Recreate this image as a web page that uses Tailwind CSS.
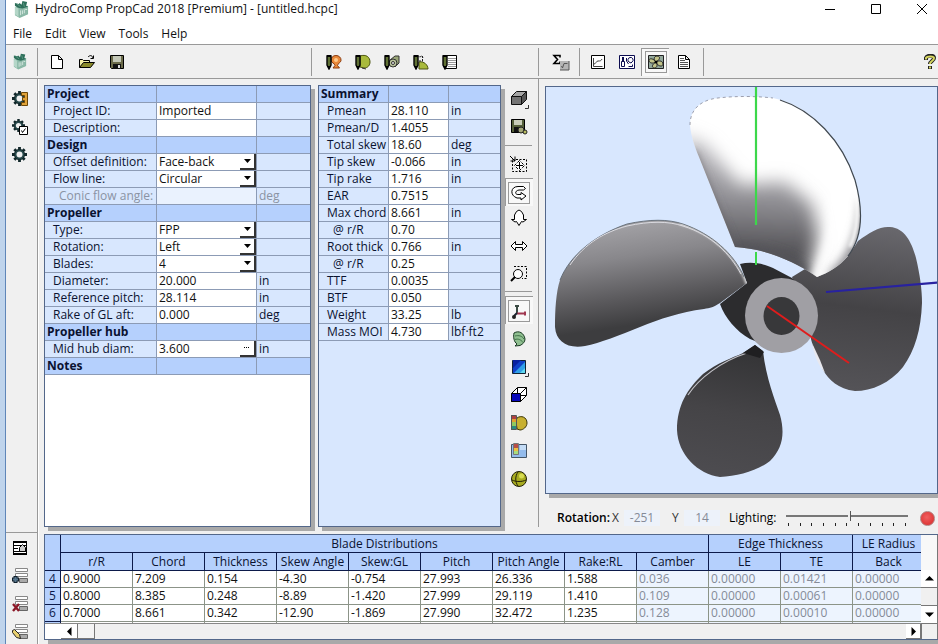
<!DOCTYPE html>
<html lang="en">
<head>
<meta charset="utf-8">
<title>HydroComp PropCad 2018</title>
<script src="https://cdn.jsdelivr.net/npm/@tailwindcss/browser@4"></script>
</head>
<body class="flex h-screen overflow-hidden bg-white text-[12px] leading-[16px] text-[#111] font-['Open_Sans','Noto_Sans',sans-serif]">

<svg class="hidden" aria-hidden="true">
  <defs>
    <symbol id="logo" viewBox="0 0 16 18">
      <path d="M1 6l4 1 10-2v9l-9 4-5-3z" fill="#86b8a4"/><path d="M1 6l4 2v9l-4-3z" fill="#b4d6c8"/><path d="M5 8l9-2v8l-9 3z" fill="#8cb8a8"/>
      <path d="M1 2l4 1 1-1 2 2 1-4 5 1-1 4 2 1-6 2-5-1-3-2z" fill="#2d6f5a"/><path d="M3 3l4 3M10 2l1 4" stroke="#5d9a85"/><path d="M7 10v5M9 10v4M11 9v4M12 9h2" stroke="#d5e8df"/>
    </symbol>
    <symbol id="gear" viewBox="0 0 16 16">
      <path d="M8 0v16M0 8h16M2.500 2.500l11 11M13.500 2.500l-11 11" stroke="#12272a" stroke-width="3"/><circle cx="8" cy="8" r="5.500" fill="#26484a" stroke="#12272a"/><circle cx="8" cy="8" r="3.200" fill="#f0f0f0"/>
    </symbol>
    <symbol id="pen" viewBox="0 0 6 16">
      <path d="M1 2h4v9l-2 4-2-4z" fill="#5f7034" stroke="#000" stroke-width="1.400"/><path d="M1 1h4v2H1zM1 12h4l-2 3z" fill="#000"/>
    </symbol>
    <symbol id="rows" viewBox="0 0 16 16">
      <path d="M3.500.500h12v3h-12zM3.500 5.500h12v3h-12z" fill="#fff" stroke="#888"/><path d="M7.500 10.500h8v4h-8z" fill="#aaa" stroke="#666"/>
    </symbol>
  </defs>
</svg>

<div class="w-[6px] shrink-0 border-r border-[#5f86b8] bg-[#bfd4ec]"></div>

<div class="flex min-w-0 flex-1 flex-col bg-[#f0f0f0]">
  <header class="flex h-[18px] shrink-0 items-center bg-white pl-2">
    <svg class="h-[17px] w-[15px]"><use href="#logo"/></svg>
    <h1 class="ml-[6px] flex-1 whitespace-nowrap">HydroComp PropCad 2018 [Premium] - [untitled.hcpc]</h1>
    <div class="flex gap-[30px] pr-[8px]">
      <button aria-label="Minimize"><svg class="size-4" viewBox="0 0 16 16" stroke="#000"><path d="M3 8.500h10"/></svg></button>
      <button aria-label="Maximize"><svg class="size-4" viewBox="0 0 16 16" stroke="#000" fill="none"><path d="M3.500 3.500h9v9h-9z"/></svg></button>
      <button aria-label="Close"><svg class="size-4" viewBox="0 0 16 16" stroke="#000"><path d="M3 3l10 10M13 3L3 13"/></svg></button>
    </div>
  </header>
  <nav class="flex h-[26px] shrink-0 items-center gap-[13px] bg-white pl-[7px] pt-[6px]">
    <button>File</button><button>Edit</button><button>View</button><button>Tools</button><button>Help</button>
  </nav>

  <div class="flex h-[35px] shrink-0 items-center border-y border-[#999]">
    <div class="flex h-[28px] w-[32px] items-center justify-center border-r border-[#999] pr-1"><svg class="h-[17px] w-[14px]"><use href="#logo"/></svg></div>
    <div class="flex h-[28px] w-[274px] items-center gap-[14px] border-r border-[#999] pl-[11px]">
      <button aria-label="New"><svg class="size-4" viewBox="0 0 16 16" fill="#fff" stroke="#000"><path d="M2.500 1.500h7l4 4v9h-11zM9.500 1.500v4h4"/></svg></button>
      <button aria-label="Open"><svg class="size-4" viewBox="0 0 16 16" stroke="#000"><path d="M.500 13.500v-8h3l1 1h6v3" fill="#f3eea5"/><path d="M.500 13.500l4-5h11l-4 5z" fill="#8a8a2a"/><path d="M9 3c2-2 4-2 5 1M14.500 1.500v3h-3" fill="none"/></svg></button>
      <button aria-label="Save"><svg class="size-4" viewBox="0 0 16 16"><path d="M1.500 1.500h13v13h-12l-1-1z" fill="#6b6b4a" stroke="#000"/><path d="M4 2h8v6H4z" fill="#c4c8b8"/><path d="M4 10h8v5H4z" fill="#111"/><path d="M9 11h2v3H9z" fill="#ddd"/></svg></button>
    </div>
    <div class="flex h-[28px] w-[227px] items-center gap-[13px] border-r border-[#999] pl-[14px]">
      <button aria-label="Edit point"><svg class="size-4" viewBox="0 0 16 16"><path d="M10 1.500a5 4.500 0 0 1 5 5c0 2-3.500 3-3.500 5l2 2.500H7l2-2.500c0-2-4-3-4-5a5 4.500 0 0 1 5-5z" fill="#e9893a" stroke="#8c3c10"/><circle cx="10" cy="6" r="2" fill="#ffc98a"/><use href="#pen" width="6" height="16"/></svg></button>
      <button aria-label="Edit blade"><svg class="size-4" viewBox="0 0 16 16"><path d="M5 13V2c6-2 10 1 10 6 0 3-2 6-6 6z" fill="#a9ba3c" stroke="#4c5510"/><path d="M7 14l4 1" stroke="#333"/><use href="#pen" width="6" height="16"/></svg></button>
      <button aria-label="Edit hub"><svg class="size-4" viewBox="0 0 16 16"><path d="M6 6l5-4h4v7l-4 4z" fill="#9aa678" stroke="#333"/><circle cx="9" cy="9" r="4" fill="#b8c29a" stroke="#333"/><circle cx="9" cy="9" r="1.500" fill="#eee" stroke="#333"/><use href="#pen" width="6" height="16"/></svg></button>
      <button aria-label="Edit root"><svg class="size-4" viewBox="0 0 16 16"><path d="M6 15V8c5-1 9 3 9 7z" fill="#a9ba3c" stroke="#4c5510"/><path d="M5 1.500l2 2 1.500-2L10 3.500M9.500 2v5M6 7h4" stroke="#222" fill="none" stroke-dasharray="2 1"/><use href="#pen" width="6" height="16"/></svg></button>
      <button aria-label="Edit table"><svg class="size-4" viewBox="0 0 16 16"><path d="M3.500 1.500h11v13h-11z" fill="#fff" stroke="#000"/><path d="M6 4.500h8M6 6.500h8M6 8.500h8M6 10.500h8M6 12.500h8" stroke="#999"/><use href="#pen" width="6" height="16"/></svg></button>
    </div>
    <div class="flex h-[28px] w-[41px] items-center justify-center border-r border-[#999] pl-1">
      <button aria-label="Calculate"><svg class="size-[18px]" viewBox="0 0 18 18"><path d="M8 4.500V2.500H2L5.500 6.500 2 10.500h6V8.500" fill="none" stroke="#000" stroke-width="1.600"/><path d="M8 8h9v9H8z" fill="#b5b5b5"/><path d="M9.500 13l1 2 1.500-4.500h3.500M17 8v9H8" fill="none" stroke="#555"/></svg></button>
    </div>
    <div class="flex h-[28px] w-[124px] items-center border-r border-[#999] pl-[10px]">
      <button aria-label="Graph" class="mr-[13px]"><svg class="size-4" viewBox="0 0 16 16" fill="none" stroke="#000"><path d="M1.500 1.500h13v13h-13z" fill="#fff"/><path d="M3.500 4v8.500h9M4 10c2 0 2-3 4-3s3 0 4-2" stroke="#444"/></svg></button>
      <button aria-label="Drawing" class="mr-[6px]"><svg class="size-4" viewBox="0 0 16 16" fill="none" stroke="#0c0c50"><path d="M.500 1.500h15v13H.500z" fill="#fff"/><path d="M4.500 3v4M3.500 3v4M2.500 7.500h3v5h-3zM7.500 4v3l2 3M11 3.500a2.500 2.500 0 0 1 2 4.500l-1 1-2-1a2.500 2.500 0 0 1 1-4.500zM9.500 12.500h4v-2"/></svg></button>
      <button aria-label="3D view" aria-pressed="true" class="mr-[7px] flex size-[28px] items-center justify-center border-l border-t border-[#999] bg-[#f8f8f8]"><span class="flex size-[22px] items-center justify-center border border-[#999]"><svg class="size-4" viewBox="0 0 16 16"><path d="M.500 1.500h15v13H.500z" fill="#93a89c" stroke="#222"/><g fill="#c2c48a" stroke="#222"><path d="M8 8C5 6 6 2 9 2s4 3-1 6z"/><path d="M8 8C5 10 1 9 1 6.500S5 4 8 8z"/><path d="M8 8c3-2 7-1 7 2s-5 3-7-2z"/><path d="M8 8c2 3 1 6-1.500 6S3 11 8 8z"/></g><circle cx="8" cy="8" r="1.500"/></svg></span></button>
      <button aria-label="Report"><svg class="size-4" viewBox="0 0 16 16" fill="#fff" stroke="#000"><path d="M2.500 1.500h7l4 4v9h-11zM9.500 1.500v4h4"/><path d="M4 4.500h4M4 6.500h5M4 8.500h8M4 10.500h8M4 12.500h8" stroke="#555"/></svg></button>
    </div>
    <button aria-label="Help" class="ml-auto"><svg class="size-4" viewBox="0 0 16 16" fill="none"><path d="M4 6V4c1-3 8-3 8 0 0 3-4 3-4 6M8 12v3" stroke="#222" stroke-width="4"/><path d="M4 5.500V4c1-2 8-2 8 0 0 3-4 3-4 6M8 12.500v2" stroke="#d6d660" stroke-width="2"/></svg></button>
  </div>

  <div class="flex min-h-0 flex-1">
    <aside class="flex w-[32px] shrink-0 flex-col border-r border-[#999]">
      <div class="flex flex-1 flex-col items-start gap-[12px] pl-[6px] pt-[12px]">
        <button aria-label="Units"><svg class="size-4" viewBox="0 0 16 16"><use href="#gear" width="15" height="15"/><path d="M9.500 1.500h6v13h-6v-3h3v-2h-2v-3h2v-2h-3z" fill="#e0a33a" stroke="#6b4708"/></svg></button>
        <button aria-label="Preferences"><svg class="size-4" viewBox="0 0 16 16"><use href="#gear" width="13" height="13"/><path d="M7.500 7.500h8v8h-8z" fill="#fff" stroke="#000"/><path d="M9.500 11.500l1 2 3-4" fill="none" stroke="#000"/></svg></button>
        <button aria-label="Settings"><svg class="size-[15px]"><use href="#gear"/></svg></button>
      </div>
      <div class="flex flex-col items-start gap-[12px] border-t border-[#999] pb-[4px] pl-[6px] pt-[7px]">
        <button aria-label="Row options"><svg class="size-4" viewBox="0 0 16 16"><path d="M1 1h14v14H1z" fill="#fff"/><path d="M1 2h14M1 14h14" stroke="#000" stroke-width="2"/><path d="M1 5.500h14M1 8.500h5M1 11.500h14M1.500 1v14M14.500 1v14" stroke="#000"/><path d="M7.500 11.500v-4l3-3 3 3v4z" fill="#ccc" stroke="#000"/></svg></button>
        <button aria-label="Add row"><svg class="size-4" viewBox="0 0 16 16"><use href="#rows" width="16" height="16"/><path d="M3.500 8v7M0 11.500h7" stroke="#10202c" stroke-width="4"/><path d="M3.500 9v5M1 11.500h5" stroke="#587890" stroke-width="2"/></svg></button>
        <button aria-label="Delete row"><svg class="size-4" viewBox="0 0 16 16"><use href="#rows" width="16" height="16"/><path d="M1 8l6 7M7 8l-6 7" stroke="#8c1828" stroke-width="2.400"/></svg></button>
        <button aria-label="Edit row"><svg class="size-4" viewBox="0 0 16 16"><use href="#rows" width="16" height="16"/><path d="M.500 6.500l2-1 5 5 1 4-4-1-4-5z" fill="#e8d070" stroke="#222"/></svg></button>
      </div>
    </aside>

    <main class="flex min-w-0 flex-1 flex-col border-l border-white pl-[5px]">
      <div class="flex min-h-0 flex-1">
        <section class="mb-[7px] mr-[7px] mt-[6px] flex w-[267px] shrink-0 flex-col border border-[#53678a] bg-white shadow-[4px_4px_0_#a9a9a9]">
          <table class="w-full table-fixed border-separate border-spacing-0 text-[#0a1230]">
            <colgroup><col class="w-[112px]"><col class="w-[100px]"><col></colgroup>
            <tbody id="project"></tbody>
          </table>
          <textarea aria-label="Notes" class="w-full flex-1 resize-none p-1 outline-none"></textarea>
        </section>

        <section class="mb-[7px] mt-[6px] w-[183px] shrink-0 border border-[#53678a] bg-[#d8e7fe] shadow-[4px_4px_0_#a9a9a9]">
          <table class="w-full table-fixed border-separate border-spacing-0 text-[#0a1230]">
            <colgroup><col class="w-[70px]"><col class="w-[60px]"><col></colgroup>
            <tbody id="summary"></tbody>
          </table>
        </section>

        <div class="mb-[7px] flex w-[38px] shrink-0 flex-col items-center border-r border-[#999] pr-[2px] pt-[10px]">
          <button aria-label="Projection" class="mb-[8px]"><svg class="size-5" viewBox="0 0 20 20"><path d="M2.500 7.500h10v8h-10z" fill="#747474" stroke="#111"/><path d="M2.500 7.500l5-5h10l-5 5z" fill="#a5a5a5" stroke="#111"/><path d="M12.500 7.500l5-5v8l-5 5z" fill="#555" stroke="#111"/><path d="M19.500 16v3.500H16" fill="none" stroke="#333"/></svg></button>
          <button aria-label="Save image" class="mb-[8px]"><svg class="size-5" viewBox="0 0 20 20"><path d="M2.500 2.500h13v13h-13z" fill="#55603a" stroke="#000"/><path d="M5 3h8v5H5z" fill="#c8ccb8"/><path d="M5 10h7v5H5z" fill="#111"/><circle cx="12" cy="13" r="3" fill="#a5a878" stroke="#222"/><circle cx="16" cy="15" r="2" fill="#b8bc60" stroke="#222"/></svg></button>
          <div class="mb-[8px] h-px w-[27px] bg-[#999]"></div>
          <button aria-label="Fit view" class="mb-[4px]"><svg class="size-5" viewBox="0 0 20 20" fill="none" stroke="#000"><path d="M3.500 5.500h14v12h-14z" stroke-dasharray="2 1.500"/><path d="M10.500 6.500l-5 5 5 5 5-5z" fill="#fff" stroke-dasharray="3 1.500"/><path d="M10.500 8v7M7 11.500h7M1 2l5 5M6 2.500v4.500H1.500"/></svg></button>
          <button aria-label="Rotate" aria-pressed="true" class="mb-[2px] flex size-[28px] items-center justify-center border-l border-t border-[#999] bg-[#f8f8f8]"><span class="flex size-[22px] items-center justify-center border border-[#999]"><svg class="size-5" viewBox="0 0 20 20" fill="#fff" stroke="#000"><path d="M16.500 5.500l-2-2H9c-7.500 0-8.500 9-1 11.500h4v2l5-4-5-3.500v2H9c-3.500 0-3-4 1-4.500h4.500z"/></svg></span></button>
          <button aria-label="Tilt" class="mb-[8px]"><svg class="size-5" viewBox="0 0 20 20" fill="#fff" stroke="#000"><path d="M7.500 3.500l2.500-1.500 2.500 1.500L14.500 7v4.500h3L14 14l-1.500-.5L10 17.500 7.500 13.500 6 14l-3.500-2.500h3V7z"/></svg></button>
          <button aria-label="Pan" class="mb-[8px]"><svg class="size-5" viewBox="0 0 20 20" fill="#fff" stroke="#000"><path d="M2 10l4.500-4.500v3h7v-3L18 10l-4.500 4.500v-3h-7v3z"/></svg></button>
          <button aria-label="Zoom" class="mb-[7px]"><svg class="size-5" viewBox="0 0 20 20" fill="none" stroke="#000"><path d="M5 2.500h12.500v12H13" stroke-dasharray="2 1.500"/><circle cx="9" cy="10" r="4.500" fill="#fff"/><path d="M6 13l-4 4" stroke-width="2"/></svg></button>
          <div class="mb-[4px] h-px w-[27px] bg-[#999]"></div>
          <button aria-label="Axes" aria-pressed="true" class="mb-[5px] flex size-[28px] items-center justify-center border-l border-t border-[#999] bg-[#f8f8f8]"><span class="flex size-[22px] items-center justify-center border border-[#999]"><svg class="size-5" viewBox="0 0 20 20" fill="none"><path d="M8 12V4M6 5h4" stroke="#3a4a44" stroke-width="2"/><path d="M8 12.500h9M16 10.500v4" stroke="#a03850" stroke-width="2"/><path d="M8 12l-3 3" stroke="#1c2430" stroke-width="2"/><circle cx="5" cy="16" r="2" fill="#222"/></svg></span></button>
          <button aria-label="Blade" class="mb-[8px]"><svg class="size-5" viewBox="0 0 20 20"><path d="M5 4c5-3 10 0 11 6 0 3-2 5-5 6.500L6 17l2-2c-3-2-4-7-3-11z" fill="#8fbf90" stroke="#1b3a24"/><path d="M6 7c4-1 7 0 9 3M6 10.500c3-1 6 0 8 3" fill="none" stroke="#3f7046"/></svg></button>
          <button aria-label="Background" class="mb-[8px]"><svg class="size-5" viewBox="0 0 20 20"><path d="M3.500 3.500h13v13h-13z" fill="#1040c8" stroke="#123"/><path d="M3 12L12 3H4v9z" fill="#0820a0"/><path d="M5 16L16 5v11z" fill="#30a0e8"/><path d="M11 16l5-5v5z" fill="#60d8f0"/><path d="M19.500 16v3.500H16" fill="none" stroke="#333"/></svg></button>
          <button aria-label="Wireframe" class="mb-[8px]"><svg class="size-5" viewBox="0 0 20 20" fill="#fff" stroke="#000"><path d="M2.500 8.500l6-6h9v8l-6 6h-9z"/><path d="M17.500 2.500l-6 6M8.500 2.500v8h9" fill="none"/><path d="M2.500 8.500h9v8h-9z" fill="#0808b8"/></svg></button>
          <button aria-label="Contours" class="mb-[8px]"><svg class="size-5" viewBox="0 0 20 20"><path d="M8 16c0-3-2-8 0-11 4-3 10-1 10 5 0 4-4 7-7 7z" fill="#c8b030" stroke="#3a3508"/><path d="M2 2h5v4H2z" fill="#b04040"/><path d="M2 6h5v3H2z" fill="#e0a030"/><path d="M2 9h5v4H2z" fill="#90c860"/><path d="M2 13h5v4H2z" fill="#2a8a80"/><path d="M2.500 2.500h5v14h-5z" fill="none" stroke="#555"/></svg></button>
          <button aria-label="Legend" class="mb-[8px]"><svg class="size-5" viewBox="0 0 20 20"><path d="M2.500 3.500h15v13h-15z" fill="#94bcec" stroke="#456"/><path d="M11 4h6v5h-6z" fill="#c4dcf6"/><path d="M5 3h4v4H5z" fill="#b85048"/><path d="M5 7h4v3H5z" fill="#f0c040"/><path d="M5 10h4v3H5z" fill="#a8dc80"/><path d="M4.500 2.500h5v11h-5z" fill="none" stroke="#777"/></svg></button>
          <button aria-label="Sphere"><svg class="size-5" viewBox="0 0 20 20"><circle cx="10" cy="10" r="7.500" fill="#a8ac20" stroke="#222008"/><path d="M3 11c4 2 10 2 14 0M9 3c-3 4-3 10 0 14" fill="none" stroke="#222008"/><circle cx="12.500" cy="7" r="2.500" fill="#d8dc50"/></svg></button>
        </div>

        <div class="flex min-w-0 flex-1 flex-col pl-[6px] pt-[7px]">
          <div class="min-h-0 flex-1 border border-[#53678a] bg-[#d8e7fe] shadow-[4px_4px_0_#a9a9a9]">
            <svg class="size-full" viewBox="546 87 391 406" role="img" aria-label="Propeller">
              <defs>
                <linearGradient id="shade" gradientUnits="userSpaceOnUse" x1="760" y1="160" x2="755" y2="255"><stop offset="0" stop-color="#b4b3b8"/><stop offset=".45" stop-color="#8e8d92"/><stop offset="1" stop-color="#4e4d51"/></linearGradient>
                <linearGradient id="left" gradientUnits="userSpaceOnUse" x1="640" y1="218" x2="655" y2="322"><stop offset="0" stop-color="#a5a4a8"/><stop offset=".35" stop-color="#88878b"/><stop offset=".75" stop-color="#59585b"/><stop offset="1" stop-color="#3d3d3f"/></linearGradient>
                <linearGradient id="right" gradientUnits="userSpaceOnUse" x1="880" y1="228" x2="860" y2="390"><stop offset="0" stop-color="#68676c"/><stop offset=".5" stop-color="#444346"/><stop offset="1" stop-color="#545357"/></linearGradient>
                <linearGradient id="bot" gradientUnits="userSpaceOnUse" x1="745" y1="350" x2="720" y2="477"><stop offset="0" stop-color="#343436"/><stop offset=".5" stop-color="#454447"/><stop offset="1" stop-color="#4d4c50"/></linearGradient>
                <filter id="b3" x="-50%" y="-50%" width="200%" height="200%"><feGaussianBlur stdDeviation="9"/></filter>
                <filter id="b2" x="-50%" y="-50%" width="200%" height="200%"><feGaussianBlur stdDeviation="5"/></filter>
                <filter id="b1" x="-50%" y="-50%" width="200%" height="200%"><feGaussianBlur stdDeviation="1.500"/></filter>
                <path id="topShape" d="M735 247L699 157C694 145 691 136 690 125C690 110 700 100 718 98C735 96 755 96 773 98C810 105 842 140 855 180C864 212 862 238 848 256C840 266 828 273 817 277C800 265 770 249 735 247Z"/>
                <path id="leftShape" d="M555 327C555 310 556 292 560 280C570 255 595 235 627 224C650 219 668 219 683 224C715 234 738 258 747 283L720 303C714 307 710 308 704 309C680 312 660 319 640 327C620 335 600 343 585 346C568 349 556 342 555 327Z"/>
                <clipPath id="tc"><use href="#topShape"/></clipPath><clipPath id="lc"><use href="#leftShape"/></clipPath>
              </defs>
              <path d="M792 277L805 269L825 273C840 266 850 255 858 241C870 232 880 226 890 227C905 228 912 243 916 258C920 275 922 290 922 303C921 330 915 350 903 367C890 383 872 391 855 391C838 389 829 380 823 370C817 358 813 348 810 335Z" fill="url(#right)"/>
              <path d="M812 343C814 356 819 366 825 373L820 360Z" fill="#e8e8ee"/>
              <path d="M740 264C752 261 765 264 773 268L792 278L812 300L765 345L750 339C736 331 725 318 720 304L747 283Z" fill="#2c2c2e"/>
              <path d="M755 345L763 351C766 378 775 400 780 415C785 433 783 448 770 461C757 471 738 476 720 477C698 474 678 455 677 430C677 405 688 388 703 374C717 363 732 358 743 353Z" fill="url(#bot)"/>
              <path d="M747 353C722 361 699 378 688 395" fill="none" stroke="#c4c4ca" stroke-width="1.200"/>
              <path d="M755 345L764 352L760 358L743 353Z" fill="#1f1f21"/>
              <use href="#leftShape" fill="url(#left)"/>
              <g clip-path="url(#lc)"><path d="M680 222C712 230 740 256 749 286" fill="none" stroke="#fff" stroke-width="4" filter="url(#b1)"/></g>
              <path d="M560 280C570 255 595 235 627 224C650 219 668 219 683 224C712 234 734 254 744 277" fill="none" stroke="#55606a" stroke-width=".8"/>
              <path d="M570 265C585 243 605 232 627 226C650 221 668 221 683 226C712 235 730 254 741 274" fill="none" stroke="#dcdce2" stroke-width="1"/>
              <path d="M756 252V265" stroke="#3cd84a" stroke-width="2"/>
              <use href="#topShape" fill="#fff"/>
              <g clip-path="url(#tc)">
                <path d="M680 135L705 145L740 185L785 182L812 204L818 235L806 290L725 275Z" fill="url(#shade)" filter="url(#b3)"/>
                <path d="M690 152L732 254" fill="none" stroke="#5a595e" stroke-width="9" filter="url(#b2)"/>
                <path d="M737 251C765 252 790 262 806 275" fill="none" stroke="#55545a" stroke-width="14" filter="url(#b2)"/>
                <path d="M836 185C838 220 830 250 815 282" fill="none" stroke="#fff" stroke-width="10" filter="url(#b2)"/>
                <path d="M866 200C864 240 850 262 832 278" fill="none" stroke="#8a898e" stroke-width="12" filter="url(#b2)"/>
                <path d="M843 152C859 185 862 222 850 247" fill="none" stroke="#fff" stroke-width="3" filter="url(#b1)"/>
              </g>
              <path d="M780 100C812 110 842 140 855 180C864 212 862 238 848 256" fill="none" stroke="#404850" stroke-width="1.200"/>
              <path d="M690 125C690 110 700 100 718 98C735 96 755 96 773 98" fill="none" stroke="#667" stroke-width=".6" stroke-dasharray="3 3"/>
              <ellipse cx="781.500" cy="315.500" rx="36.500" ry="37.500" fill="#a09fa4"/>
              <ellipse cx="781.500" cy="316" rx="18" ry="19" fill="#38383a"/>
              <path d="M756 87V225" stroke="#3cd84a" stroke-width="2.200"/>
              <path d="M826 292L938 282.500" stroke="#2822a0" stroke-width="2.200"/>
              <path d="M767 306L849 363" stroke="#e01c1c" stroke-width="2"/>
            </svg>
          </div>
          <div class="flex h-[40px] shrink-0 items-center whitespace-nowrap pl-[12px] pr-[3px] pt-[8px]">
            <span class="w-[55px] font-semibold text-black">Rotation:</span>
            <label for="rx" class="w-[12px] text-[#333]">X</label>
            <input id="rx" value="-251" readonly class="mr-[12px] w-[36px] bg-[#edf2fa] text-center text-[#858b98] outline-none">
            <label for="ry" class="w-[12px] text-[#333]">Y</label>
            <input id="ry" value="14" readonly class="mr-[9px] w-[36px] bg-[#edf2fa] text-center text-[#858b98] outline-none">
            <label for="light" class="w-[55px] text-black">Lighting:</label>
            <div class="min-w-0 flex-1 pl-[2px] pr-[12px]">
              <input id="light" type="range" min="0" max="100" value="52" class="block h-[10px] w-full appearance-none bg-transparent [&::-webkit-slider-runnable-track]:h-[2px] [&::-webkit-slider-runnable-track]:bg-[#777] [&::-webkit-slider-thumb]:mt-[-4px] [&::-webkit-slider-thumb]:h-[10px] [&::-webkit-slider-thumb]:w-[3px] [&::-webkit-slider-thumb]:appearance-none [&::-webkit-slider-thumb]:border-r [&::-webkit-slider-thumb]:border-[#555] [&::-webkit-slider-thumb]:bg-[#f0f0f0]">
              <div class="flex justify-between px-[2px] pt-[2px]" id="ticks"></div>
            </div>
            <button aria-label="Record" class="size-[15px] rounded-full border border-[#b08080] bg-[radial-gradient(circle_at_45%_40%,#f06060,#d82828)]"></button>
          </div>
        </div>
      </div>

      <section class="mb-[4px] flex shrink-0 border border-r-0 border-[#53678a] bg-[#f0f0f0] shadow-[4px_4px_0_#a9a9a9]">
        <div class="min-w-0 flex-1">
          <div class="h-[89px] overflow-hidden border-b border-[#888]">
            <table class="w-[880px] table-fixed border-separate border-spacing-0 bg-white">
              <thead id="bhead" class="text-[#0a1230]"></thead>
              <tbody id="blades"></tbody>
            </table>
          </div>
          <div class="flex h-[15px]">
            <div class="w-[16px] bg-white"></div>
            <button aria-label="Scroll left" class="flex w-[17px] items-center justify-center border-b border-r border-[#777] bg-white"><svg class="size-[9px]" viewBox="0 0 9 9"><path d="M6.500 0v9L2 4.500z"/></svg></button>
            <div class="w-[17px] border-b border-r border-[#777] bg-[#f4f4f4]"></div>
            <div class="flex-1"></div>
            <button aria-label="Scroll right" class="flex w-[15px] items-center justify-center border-b border-r border-[#777] bg-white"><svg class="size-[9px]" viewBox="0 0 9 9"><path d="M2.500 0v9L7 4.500z"/></svg></button>
          </div>
        </div>
        <div class="flex w-[17px] shrink-0 flex-col border-r border-[#777]">
          <div class="h-[35px] bg-[#f8f8f8]"></div>
          <button aria-label="Scroll up" class="flex h-[18px] items-center justify-center border-b border-[#777] bg-white"><svg class="size-[9px]" viewBox="0 0 9 9"><path d="M0 6.500h9L4.500 2z"/></svg></button>
          <div class="h-[18px] border-b border-[#777] bg-[#f0f0f0]"></div>
          <button aria-label="Scroll down" class="flex h-[18px] items-center justify-center border-b border-[#777] bg-white"><svg class="size-[9px]" viewBox="0 0 9 9"><path d="M0 2.500h9L4.500 7z"/></svg></button>
          <div class="flex-1 border-l border-[#777]"></div>
        </div>
      </section>
    </main>
  </div>
</div>

<script>
const head = (t) => `<tr><th scope="rowgroup" class="h-[17px] border-b border-r border-[#8c9bb5] bg-[#b5d0fd] pl-[2px] text-left align-middle font-bold leading-[16px] whitespace-nowrap">${t}</th><td class="border-b border-r border-[#8c9bb5] bg-[#b5d0fd]"></td><td class="border-b border-[#8c9bb5] bg-[#b5d0fd]"></td></tr>`;

const project = [
  ['h','Project'],['t','Project ID:','Imported',''],['t','Description:','',''],
  ['h','Design'],['s','Offset definition:','Face-back',''],['s','Flow line:','Circular',''],['d','Conic flow angle:','','deg'],
  ['h','Propeller'],['s','Type:','FPP',''],['s','Rotation:','Left',''],['s','Blades:','4',''],
  ['t','Diameter:','20.000','in'],['t','Reference pitch:','28.114','in'],['t','Rake of GL aft:','0.000','deg'],
  ['h','Propeller hub'],['b','Mid hub diam:','3.600','in'],['h','Notes']
];
document.getElementById('project').innerHTML = project.map(([k, l, v, u], i) => {
  if (k === 'h') return head(l);
  const off = k === 'd';
  let field;
  if (k === 's') field = `<div class="relative flex"><select id="p${i}" class="h-[16px] w-full appearance-none bg-white pl-[2px] leading-[16px] text-[#111] outline-none"><option>${v}</option></select><span class="pointer-events-none absolute right-0 top-0 flex h-[16px] w-[16px] items-center justify-center border-b-2 border-r-2 border-[#333] bg-white"><svg class="h-[4px] w-[7px]" viewBox="0 0 7 4"><path d="M0 0h7L3.500 4z"/></svg></span></div>`;
  else if (k === 'b') field = `<div class="flex"><input id="p${i}" value="${v}" class="h-[16px] min-w-0 flex-1 bg-white pl-[2px] text-[#111] outline-none"><button aria-label="Browse" class="flex h-[16px] w-[16px] items-center justify-center border-b-2 border-r-2 border-[#333] bg-white"><svg class="h-[2px] w-[6px]" viewBox="0 0 6 2"><path d="M0 0h1v1H0zM2 0h1v1H2zM4 0h1v1H4z"/></svg></button></div>`;
  else field = `<input id="p${i}" value="${v}" ${off ? 'disabled' : ''} class="block h-[16px] w-full ${off ? 'bg-[#eaf2fe]' : 'bg-white'} pl-[2px] text-[#111] outline-none">`;
  return `<tr class="${off ? 'text-[#8a93a3]' : ''}"><td class="h-[17px] border-b border-r border-[#8c9bb5] bg-[#d8e7fe] ${off ? 'pl-[14px]' : 'pl-[8px]'} whitespace-nowrap leading-[16px]"><label for="p${i}">${l}</label></td><td class="border-b border-r border-[#8c9bb5] p-0">${field}</td><td class="border-b border-[#8c9bb5] bg-[#d8e7fe] pl-[2px] leading-[16px]">${u}</td></tr>`;
}).join('');

const summary = [['Pmean','28.110','in'],['Pmean/D','1.4055',''],['Total skew','18.60','deg'],['Tip skew','-0.066','in'],['Tip rake','1.716','in'],['EAR','0.7515',''],['Max chord','8.661','in'],['@ r/R','0.70',''],['Root thick','0.766','in'],['@ r/R','0.25',''],['TTF','0.0035',''],['BTF','0.050',''],['Weight','33.25','lb'],['Mass MOI','4.730','lbf·ft2']];
document.getElementById('summary').innerHTML = head('Summary') + summary.map(([l, v, u]) =>
  `<tr><td class="h-[17px] border-b border-r border-[#8c9bb5] ${l[0] === '@' ? 'pl-[14px]' : 'pl-[8px]'} whitespace-nowrap leading-[16px]">${l}</td><td class="border-b border-r border-[#8c9bb5] bg-white pl-[2px] leading-[16px] text-[#111]">${v}</td><td class="border-b border-[#8c9bb5] pl-[2px] leading-[16px]">${u}</td></tr>`).join('');

const hc = 'h-[18px] whitespace-nowrap border-b border-r border-[#0c1a4a] bg-[#b5d0fd] p-0 text-center font-normal leading-[17px]';
const cols = ['r/R','Chord','Thickness','Skew Angle','Skew:GL','Pitch','Pitch Angle','Rake:RL','Camber','LE','TE','Back'];
document.getElementById('bhead').innerHTML =
  `<tr><th rowspan="2" class="${hc} w-[16px]"></th><th colspan="9" class="${hc}">Blade Distributions</th><th colspan="2" class="${hc}">Edge Thickness</th><th class="${hc}">LE Radius</th></tr>` +
  '<tr>' + cols.map(c => `<th class="${hc} w-[72px]">${c}</th>`).join('') + '</tr>';
const data = [
  ['4','0.9000','7.209','0.154','-4.30','-0.754','27.993','26.336','1.588','0.036','0.00000','0.01421','0.00000'],
  ['5','0.8000','8.385','0.248','-8.89','-1.420','27.999','29.119','1.410','0.109','0.00000','0.00061','0.00000'],
  ['6','0.7000','8.661','0.342','-12.90','-1.869','27.990','32.472','1.235','0.128','0.00000','0.00010','0.00000'],
  ['','','','','','','','','','','','','']
];
document.getElementById('blades').innerHTML = data.map(r => '<tr>' + r.map((c, i) => i === 0
  ? `<th scope="row" class="h-[17px] border-b border-r border-[#0c1a4a] bg-[#b5d0fd] p-0 text-center font-normal leading-[16px] text-[#0c1a4a]">${c}</th>`
  : `<td class="h-[17px] border-b border-r border-[#8c9488] py-0 pl-[2px] pr-0 leading-[16px] ${i > 8 ? 'bg-[#edf4fe] text-[#858b98]' : 'bg-white'}">${c}</td>`).join('') + '</tr>').join('');
document.getElementById('ticks').innerHTML = '<span class="h-[3px] w-px bg-[#222]"></span>'.repeat(11);
</script>
</body>
</html>
